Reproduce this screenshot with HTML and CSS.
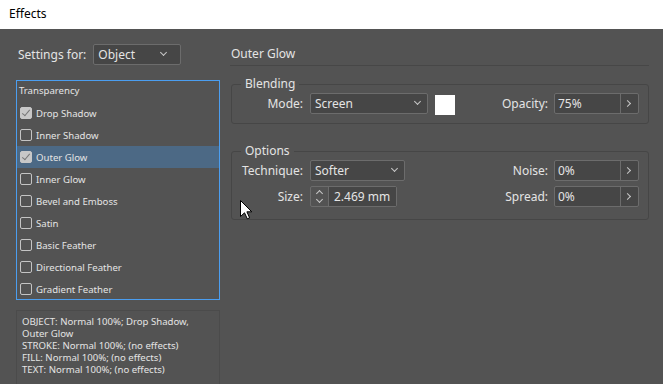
FILE: index.html
```html
<!DOCTYPE html>
<html lang="en">
<head>
    <meta charset="UTF-8">
    <title>Effects</title>
    <link rel="stylesheet" href="styles.css">
</head>
<body>
    <div class="titlebar">Effects</div>

    <div class="main">
        <div class="left">
            <div class="settings">
                <span>Settings for:</span>
                <div class="select settings-select">Object <span class="chev"></span></div>
            </div>

            <div class="list">
                <div class="list-head">Transparency</div>
                <div class="item"><span class="check on"></span>Drop Shadow</div>
                <div class="item"><span class="check"></span>Inner Shadow</div>
                <div class="item selected"><span class="check on"></span>Outer Glow</div>
                <div class="item"><span class="check"></span>Inner Glow</div>
                <div class="item"><span class="check"></span>Bevel and Emboss</div>
                <div class="item"><span class="check"></span>Satin</div>
                <div class="item"><span class="check"></span>Basic Feather</div>
                <div class="item"><span class="check"></span>Directional Feather</div>
                <div class="item"><span class="check"></span>Gradient Feather</div>
            </div>

            <div class="summary">
                OBJECT: Normal 100%; Drop Shadow,<br>
                Outer Glow<br>
                STROKE: Normal 100%; (no effects)<br>
                FILL: Normal 100%; (no effects)<br>
                TEXT: Normal 100%; (no effects)
            </div>
        </div>

        <div class="right">
            <div class="heading">Outer Glow</div>

            <fieldset class="group blending">
                <legend>Blending</legend>
                <div class="row">
                    <span class="label">Mode:</span>
                    <div class="select mode-select">Screen <span class="chev"></span></div>
                    <span class="swatch"></span>
                    <span class="spacer"></span>
                    <span class="rlabel">Opacity:</span>
                    <div class="field"><span class="value">75%</span><span class="arrow"></span></div>
                </div>
            </fieldset>

            <fieldset class="group options">
                <legend>Options</legend>
                <div class="row">
                    <span class="label">Technique:</span>
                    <div class="select tech-select">Softer <span class="chev"></span></div>
                    <span class="spacer"></span>
                    <span class="rlabel">Noise:</span>
                    <div class="field"><span class="value">0%</span><span class="arrow"></span></div>
                </div>
                <div class="row">
                    <span class="label">Size:</span>
                    <div class="spinner">
                        <span class="spin-btn"><span class="up"></span><span class="down"></span></span>
                        <span class="value">2.469 mm</span>
                    </div>
                    <span class="spacer"></span>
                    <span class="rlabel">Spread:</span>
                    <div class="field"><span class="value">0%</span><span class="arrow"></span></div>
                </div>
            </fieldset>
        </div>
    </div>

    <svg class="cursor" width="13" height="20" viewBox="0 0 13 20">
        <path d="M0.5 0.5 V16.5 L4.5 12.8 L7.3 18.8 L9.6 17.8 L6.9 11.8 H11.8 Z" fill="#fff" stroke="#000" stroke-width="1"/>
    </svg>
</body>
</html>
```

FILE: styles.css
```css
body {
    margin: 0;
    background-color: #535353;
    color: #e4e4e4;
    font-family: "Noto Sans", "Open Sans", sans-serif;
    font-size: 12px;
    width: 663px;
    height: 384px;
    overflow: hidden;
    position: relative;
}

.titlebar {
    height: 29px;
    line-height: 28px;
    background-color: #fff;
    color: #000;
    padding-left: 9px;
    font-size: 12px;
}

.main {
    display: flex;
    gap: 10px;
    padding: 15px 0 0 16px;
}

/* left column */
.left {
    width: 204px;
}

.settings {
    display: flex;
    align-items: center;
    height: 21px;
    padding-left: 2px;
}

.settings span:first-child {
    margin-right: 7px;
}

.select {
    box-sizing: border-box;
    height: 21px;
    line-height: 19px;
    border: 1px solid #6c6c6c;
    border-radius: 2px;
    background-color: #464646;
    padding-left: 4px;
    position: relative;
}

.chev {
    position: absolute;
    right: 7px;
    top: 5px;
    width: 4px;
    height: 4px;
    border-right: 1px solid #c8c8c8;
    border-bottom: 1px solid #c8c8c8;
    transform: rotate(45deg);
}

.settings-select {
    width: 88px;
}

.list {
    box-sizing: border-box;
    margin-top: 15px;
    height: 220px;
    border: 1px solid #4b9ef0;
    overflow: hidden;
    font-size: 9.6px;
}

.list-head {
    height: 21px;
    line-height: 20px;
    padding-left: 2px;
}

.item {
    height: 22px;
    display: flex;
    align-items: center;
    padding-left: 3px;
}

.item.selected {
    background-color: #4c6985;
}

.check {
    box-sizing: border-box;
    width: 12px;
    height: 12px;
    border: 1px solid #c4c4c4;
    border-radius: 2px;
    margin-right: 4px;
    position: relative;
}

.check.on {
    background-color: #c8c8c8;
    border-color: #c8c8c8;
}

.check.on::after {
    content: "";
    position: absolute;
    left: 3px;
    top: 0px;
    width: 3px;
    height: 7px;
    border-right: 1.5px solid #777;
    border-bottom: 1.5px solid #777;
    transform: rotate(40deg);
}

.summary {
    box-sizing: border-box;
    margin-top: 10px;
    height: 90px;
    border: 1px solid #4b4b4b;
    padding: 5px 5px;
    font-size: 9.6px;
    line-height: 12px;
}

/* right column */
.right {
    width: 419px;
}

.heading {
    height: 21px;
    line-height: 20px;
    border-bottom: 1px solid #474747;
    padding-left: 1px;
}

.group {
    margin: 0;
    border: 1px solid #464646;
    border-radius: 3px;
    padding: 0 9px 9px 9px;
    min-width: 0;
    margin-left: 1px;
    width: 398px;
}

.group legend {
    padding: 0 4px;
    line-height: 16px;
    margin-left: 0;
}

.blending {
    margin-top: 10px;
}

.options {
    margin-top: 19px;
    padding-bottom: 12px;
}

.blending .row {
    margin-top: 1px;
}

.options .row:first-of-type {
    margin-top: 1px;
}

.options .row + .row {
    margin-top: 5px;
}

.row {
    display: flex;
    align-items: center;
    height: 21px;
}

.label {
    width: 62px;
    text-align: right;
    margin-right: 7px;
}

.spacer {
    flex: 1;
}

.rlabel {
    margin-right: 6px;
}

.mode-select {
    width: 118px;
}

.tech-select {
    width: 95px;
}

.swatch {
    width: 20px;
    height: 20px;
    background-color: #fff;
    margin-left: 7px;
    margin-top: 2px;
}

.field {
    box-sizing: border-box;
    width: 85px;
    height: 21px;
    border: 1px solid #6c6c6c;
    border-radius: 2px;
    background-color: #464646;
    display: flex;
}

.field .value {
    flex: 1;
    line-height: 19px;
    padding-left: 3px;
    border-right: 1px solid #6c6c6c;
}

.arrow {
    width: 17px;
    position: relative;
}

.arrow::after {
    content: "";
    position: absolute;
    left: 4px;
    top: 7px;
    width: 4px;
    height: 4px;
    border-right: 1px solid #c8c8c8;
    border-top: 1px solid #c8c8c8;
    transform: rotate(45deg);
}

.spinner {
    box-sizing: border-box;
    width: 87px;
    height: 21px;
    border: 1px solid #6c6c6c;
    border-radius: 2px;
    display: flex;
}

.spin-btn {
    width: 17px;
    border-right: 1px solid #6c6c6c;
    position: relative;
}

.up, .down {
    position: absolute;
    left: 6px;
    width: 4px;
    height: 4px;
    border-left: 1px solid #c8c8c8;
    border-top: 1px solid #c8c8c8;
}

.up {
    top: 4px;
    transform: rotate(45deg);
}

.down {
    top: 10px;
    transform: rotate(225deg);
}

.spinner .value {
    line-height: 19px;
    padding-left: 5px;
    background-color: #464646;
    flex: 1;
}

.cursor {
    position: absolute;
    left: 240px;
    top: 200px;
}
```
